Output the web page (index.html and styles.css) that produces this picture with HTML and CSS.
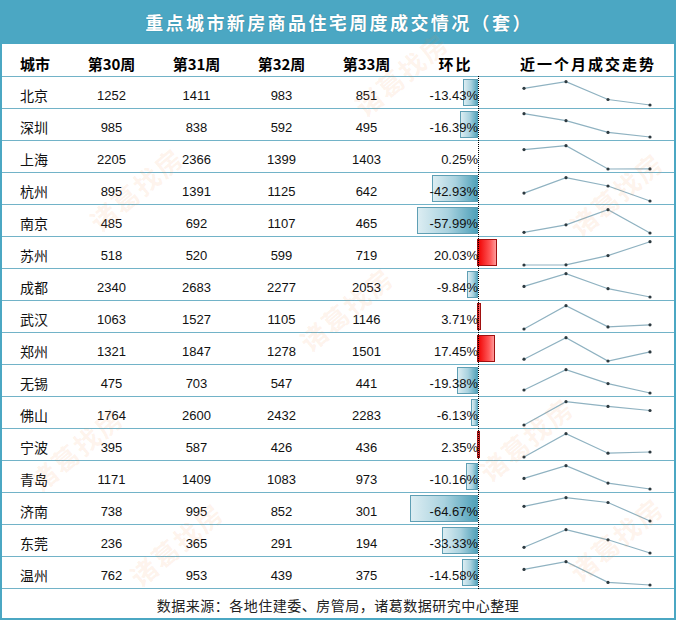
FILE: index.html
```html
<!DOCTYPE html>
<html lang="zh">
<head>
<meta charset="utf-8">
<title>重点城市新房商品住宅周度成交情况</title>
<link rel="stylesheet" href="styles.css">
</head>
<body>
<div class="page">
  <div class="title">重点城市新房商品住宅周度成交情况（套）</div>
  <div class="table">
    <div class="row head">
      <div class="c city">城市</div>
      <div class="c">第30周</div>
      <div class="c">第31周</div>
      <div class="c">第32周</div>
      <div class="c">第33周</div>
      <div class="c chg-h">环比</div>
      <div class="c trend-h">近一个月成交走势</div>
    </div>
    <div class="body">
      <div class="axis"></div>

      <div class="row"><div class="c city">北京</div><div class="c">1252</div><div class="c">1411</div><div class="c">983</div><div class="c">851</div>
        <div class="chg"><span class="bar neg" style="width:15px"></span><span class="pct">-13.43%</span></div>
        <div class="trend"><svg viewBox="0 0 172 31" width="172" height="31"><polyline points="24,11.3 66,4.7 108,22.5 150,28"/><circle cx="24" cy="11.3" r="1.6"/><circle cx="66" cy="4.7" r="1.6"/><circle cx="108" cy="22.5" r="1.6"/><circle cx="150" cy="28" r="1.6"/></svg></div></div>

      <div class="row"><div class="c city">深圳</div><div class="c">985</div><div class="c">838</div><div class="c">592</div><div class="c">495</div>
        <div class="chg"><span class="bar neg" style="width:18px"></span><span class="pct">-16.39%</span></div>
        <div class="trend"><svg viewBox="0 0 172 31" width="172" height="31"><polyline points="24,4.7 66,11.7 108,23.4 150,28"/><circle cx="24" cy="4.7" r="1.6"/><circle cx="66" cy="11.7" r="1.6"/><circle cx="108" cy="23.4" r="1.6"/><circle cx="150" cy="28" r="1.6"/></svg></div></div>

      <div class="row"><div class="c city">上海</div><div class="c">2205</div><div class="c">2366</div><div class="c">1399</div><div class="c">1403</div>
        <div class="chg"><span class="pct">0.25%</span></div>
        <div class="trend"><svg viewBox="0 0 172 31" width="172" height="31"><polyline points="24,8.6 66,4.7 108,28 150,27.9"/><circle cx="24" cy="8.6" r="1.6"/><circle cx="66" cy="4.7" r="1.6"/><circle cx="108" cy="28" r="1.6"/><circle cx="150" cy="27.9" r="1.6"/></svg></div></div>

      <div class="row"><div class="c city">杭州</div><div class="c">895</div><div class="c">1391</div><div class="c">1125</div><div class="c">642</div>
        <div class="chg"><span class="bar neg" style="width:46px"></span><span class="pct">-42.93%</span></div>
        <div class="trend"><svg viewBox="0 0 172 31" width="172" height="31"><polyline points="24,20.1 66,4.7 108,13 150,28"/><circle cx="24" cy="20.1" r="1.6"/><circle cx="66" cy="4.7" r="1.6"/><circle cx="108" cy="13" r="1.6"/><circle cx="150" cy="28" r="1.6"/></svg></div></div>

      <div class="row"><div class="c city">南京</div><div class="c">485</div><div class="c">692</div><div class="c">1107</div><div class="c">465</div>
        <div class="chg"><span class="bar neg" style="width:61px"></span><span class="pct">-57.99%</span></div>
        <div class="trend"><svg viewBox="0 0 172 31" width="172" height="31"><polyline points="24,27.3 66,19.8 108,4.7 150,28"/><circle cx="24" cy="27.3" r="1.6"/><circle cx="66" cy="19.8" r="1.6"/><circle cx="108" cy="4.7" r="1.6"/><circle cx="150" cy="28" r="1.6"/></svg></div></div>

      <div class="row"><div class="c city">苏州</div><div class="c">518</div><div class="c">520</div><div class="c">599</div><div class="c">719</div>
        <div class="chg"><span class="bar pos" style="width:20px"></span><span class="pct">20.03%</span></div>
        <div class="trend"><svg viewBox="0 0 172 31" width="172" height="31"><polyline points="24,28 66,27.8 108,18.6 150,4.7"/><circle cx="24" cy="28" r="1.6"/><circle cx="66" cy="27.8" r="1.6"/><circle cx="108" cy="18.6" r="1.6"/><circle cx="150" cy="4.7" r="1.6"/></svg></div></div>

      <div class="row"><div class="c city">成都</div><div class="c">2340</div><div class="c">2683</div><div class="c">2277</div><div class="c">2053</div>
        <div class="chg"><span class="bar neg" style="width:11px"></span><span class="pct">-9.84%</span></div>
        <div class="trend"><svg viewBox="0 0 172 31" width="172" height="31"><polyline points="24,17.4 66,4.7 108,19.7 150,28"/><circle cx="24" cy="17.4" r="1.6"/><circle cx="66" cy="4.7" r="1.6"/><circle cx="108" cy="19.7" r="1.6"/><circle cx="150" cy="28" r="1.6"/></svg></div></div>

      <div class="row"><div class="c city">武汉</div><div class="c">1063</div><div class="c">1527</div><div class="c">1105</div><div class="c">1146</div>
        <div class="chg"><span class="bar pos" style="width:4px"></span><span class="pct">3.71%</span></div>
        <div class="trend"><svg viewBox="0 0 172 31" width="172" height="31"><polyline points="24,28 66,4.7 108,25.9 150,23.8"/><circle cx="24" cy="28" r="1.6"/><circle cx="66" cy="4.7" r="1.6"/><circle cx="108" cy="25.9" r="1.6"/><circle cx="150" cy="23.8" r="1.6"/></svg></div></div>

      <div class="row"><div class="c city">郑州</div><div class="c">1321</div><div class="c">1847</div><div class="c">1278</div><div class="c">1501</div>
        <div class="chg"><span class="bar pos" style="width:18px"></span><span class="pct">17.45%</span></div>
        <div class="trend"><svg viewBox="0 0 172 31" width="172" height="31"><polyline points="24,26.2 66,4.7 108,28 150,18.9"/><circle cx="24" cy="26.2" r="1.6"/><circle cx="66" cy="4.7" r="1.6"/><circle cx="108" cy="28" r="1.6"/><circle cx="150" cy="18.9" r="1.6"/></svg></div></div>

      <div class="row"><div class="c city">无锡</div><div class="c">475</div><div class="c">703</div><div class="c">547</div><div class="c">441</div>
        <div class="chg"><span class="bar neg" style="width:21px"></span><span class="pct">-19.38%</span></div>
        <div class="trend"><svg viewBox="0 0 172 31" width="172" height="31"><polyline points="24,25 66,4.7 108,18.6 150,28"/><circle cx="24" cy="25" r="1.6"/><circle cx="66" cy="4.7" r="1.6"/><circle cx="108" cy="18.6" r="1.6"/><circle cx="150" cy="28" r="1.6"/></svg></div></div>

      <div class="row"><div class="c city">佛山</div><div class="c">1764</div><div class="c">2600</div><div class="c">2432</div><div class="c">2283</div>
        <div class="chg"><span class="bar neg" style="width:7px"></span><span class="pct">-6.13%</span></div>
        <div class="trend"><svg viewBox="0 0 172 31" width="172" height="31"><polyline points="24,28 66,4.7 108,9.4 150,13.5"/><circle cx="24" cy="28" r="1.6"/><circle cx="66" cy="4.7" r="1.6"/><circle cx="108" cy="9.4" r="1.6"/><circle cx="150" cy="13.5" r="1.6"/></svg></div></div>

      <div class="row"><div class="c city">宁波</div><div class="c">395</div><div class="c">587</div><div class="c">426</div><div class="c">436</div>
        <div class="chg"><span class="bar pos" style="width:3px"></span><span class="pct">2.35%</span></div>
        <div class="trend"><svg viewBox="0 0 172 31" width="172" height="31"><polyline points="24,28 66,4.7 108,24.2 150,23"/><circle cx="24" cy="28" r="1.6"/><circle cx="66" cy="4.7" r="1.6"/><circle cx="108" cy="24.2" r="1.6"/><circle cx="150" cy="23" r="1.6"/></svg></div></div>

      <div class="row"><div class="c city">青岛</div><div class="c">1171</div><div class="c">1409</div><div class="c">1083</div><div class="c">973</div>
        <div class="chg"><span class="bar neg" style="width:12px"></span><span class="pct">-10.16%</span></div>
        <div class="trend"><svg viewBox="0 0 172 31" width="172" height="31"><polyline points="24,17.4 66,4.7 108,22.1 150,28"/><circle cx="24" cy="17.4" r="1.6"/><circle cx="66" cy="4.7" r="1.6"/><circle cx="108" cy="22.1" r="1.6"/><circle cx="150" cy="28" r="1.6"/></svg></div></div>

      <div class="row"><div class="c city">济南</div><div class="c">738</div><div class="c">995</div><div class="c">852</div><div class="c">301</div>
        <div class="chg"><span class="bar neg" style="width:68px"></span><span class="pct">-64.67%</span></div>
        <div class="trend"><svg viewBox="0 0 172 31" width="172" height="31"><polyline points="24,13.3 66,4.7 108,9.5 150,28"/><circle cx="24" cy="13.3" r="1.6"/><circle cx="66" cy="4.7" r="1.6"/><circle cx="108" cy="9.5" r="1.6"/><circle cx="150" cy="28" r="1.6"/></svg></div></div>

      <div class="row"><div class="c city">东莞</div><div class="c">236</div><div class="c">365</div><div class="c">291</div><div class="c">194</div>
        <div class="chg"><span class="bar neg" style="width:36px"></span><span class="pct">-33.33%</span></div>
        <div class="trend"><svg viewBox="0 0 172 31" width="172" height="31"><polyline points="24,22.3 66,4.7 108,14.8 150,28"/><circle cx="24" cy="22.3" r="1.6"/><circle cx="66" cy="4.7" r="1.6"/><circle cx="108" cy="14.8" r="1.6"/><circle cx="150" cy="28" r="1.6"/></svg></div></div>

      <div class="row"><div class="c city">温州</div><div class="c">762</div><div class="c">953</div><div class="c">439</div><div class="c">375</div>
        <div class="chg"><span class="bar neg" style="width:16px"></span><span class="pct">-14.58%</span></div>
        <div class="trend"><svg viewBox="0 0 172 31" width="172" height="31"><polyline points="24,12.4 66,4.7 108,25.4 150,28"/><circle cx="24" cy="12.4" r="1.6"/><circle cx="66" cy="4.7" r="1.6"/><circle cx="108" cy="25.4" r="1.6"/><circle cx="150" cy="28" r="1.6"/></svg></div></div>
    </div>
    <div class="foot">数据来源：各地住建委、房管局，诸葛数据研究中心整理</div>
  </div>

  <div class="wm w1">诸葛找房</div>
  <div class="wm w2">诸葛找房</div>
  <div class="wm w3">诸葛找房</div>
  <div class="wm w4">诸葛找房</div>
  <div class="wm w5">诸葛找房</div>
  <div class="wm w6">诸葛找房</div>
  <div class="wm w7">诸葛找房</div>
  <div class="wm w8">诸葛找房</div>
</div>
</body>
</html>
```

FILE: styles.css
```css
html, body {
  margin: 0;
  padding: 0;
  background: #ffffff;
}

.page {
  position: relative;
  width: 676px;
  height: 622px;
  overflow: hidden;
  background: #ffffff;
  font-family: "Liberation Sans", "Noto Sans CJK SC", sans-serif;
  color: #111;
}

.title {
  height: 44px;
  background: #4ba7c3;
  color: #ffffff;
  font-family: "Noto Sans CJK SC", sans-serif;
  font-weight: 700;
  font-size: 18px;
  letter-spacing: 2.4px;
  display: flex;
  align-items: center;
  justify-content: center;
  padding-left: 2px;
  text-shadow: 0 0 1px rgba(30, 90, 110, 0.6);
}

.table {
  border-left: 2px solid #4ba7c3;
  border-right: 2px solid #4ba7c3;
  border-bottom: 2px solid #4ba7c3;
}

.row {
  display: grid;
  grid-template-columns: 67px 85px 85px 85px 85px 91px 172px;
  height: 31px;
  border-bottom: 1px solid #72b3c8;
}

.row.head {
  height: 32px;
}

.c {
  display: flex;
  align-items: center;
  justify-content: center;
  padding-top: 5px;
  font-size: 13px;
  white-space: nowrap;
}

.c.city {
  justify-content: flex-start;
  padding-left: 18px;
  font-family: "Noto Sans CJK SC", sans-serif;
  font-size: 14px;
}

.head .c {
  font-family: "Noto Sans CJK SC", sans-serif;
  font-weight: 700;
  font-size: 15px;
  padding-top: 6px;
  color: #000;
}

.head .trend-h {
  letter-spacing: 2px;
  padding-left: 4px;
}

.head .chg-h {
  letter-spacing: 2px;
  padding-left: 2px;
}

.body {
  position: relative;
}

.axis {
  position: absolute;
  left: 476px;
  top: -1px;
  bottom: 0;
  border-left: 1px dotted #000;
  z-index: 3;
}

.chg {
  position: relative;
  display: flex;
  align-items: center;
  justify-content: flex-end;
  padding-right: 22px;
  padding-top: 5px;
  font-size: 13px;
}

.pct {
  position: relative;
  z-index: 2;
}

.bar {
  position: absolute;
  top: 2px;
  height: 27px;
  box-sizing: border-box;
  z-index: 1;
}

.bar.neg {
  right: 22px;
  background: linear-gradient(to right, #dcedf2, #a9d2df 50%, #4c9fb8);
  border: 1px solid #5f9fb4;
  border-right: none;
}

.bar.pos {
  left: 68px;
  background: linear-gradient(to right, #f00000, #ff5a5a 70%, #ff9a9a);
  border: 1px solid #a01010;
}

.trend svg {
  display: block;
}

.trend polyline {
  fill: none;
  stroke: #8fb2c1;
  stroke-width: 1.2;
}

.trend circle {
  fill: #2d3a40;
}

.foot {
  height: 29px;
  display: flex;
  align-items: center;
  justify-content: center;
  padding-top: 2px;
  box-sizing: border-box;
  font-family: "Noto Sans CJK SC", sans-serif;
  font-size: 14px;
  letter-spacing: 0.5px;
  color: #222;
}

.wm {
  position: absolute;
  font-family: "Noto Sans CJK SC", sans-serif;
  font-weight: 700;
  font-size: 26px;
  letter-spacing: 2px;
  color: rgba(245, 140, 70, 0.10);
  transform: rotate(-40deg);
  pointer-events: none;
  white-space: nowrap;
  z-index: 5;
}

.w1 { left: 80px; top: 170px; }
.w2 { left: 345px; top: 55px; }
.w3 { left: 560px; top: 175px; }
.w4 { left: 290px; top: 290px; }
.w5 { left: 20px; top: 430px; }
.w6 { left: 470px; top: 420px; }
.w7 { left: 120px; top: 525px; }
.w8 { left: 560px; top: 520px; }
```
